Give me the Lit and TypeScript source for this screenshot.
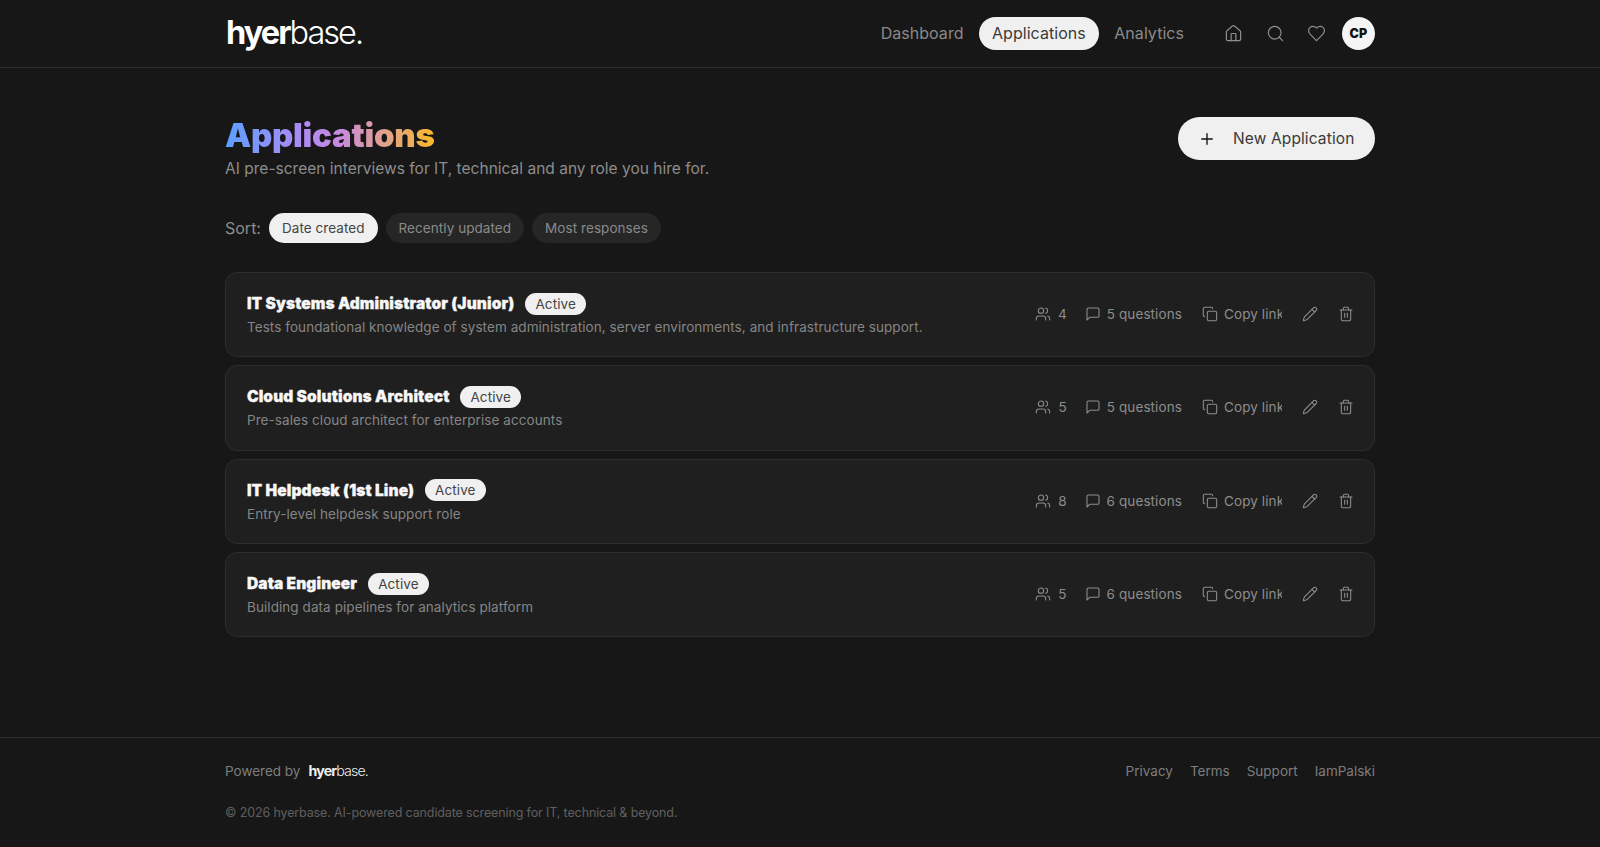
import { LitElement, html, css, svg } from "lit";
import { customElement } from "lit/decorators.js";

const ic = (body: unknown, size = 16, sw = 1.6) => html`<svg class="ic" width=${size} height=${size} viewBox="0 0 24 24" fill="none" stroke="currentColor" stroke-width=${sw} stroke-linecap="round" stroke-linejoin="round">${body}</svg>`;
const house = svg`<path d="M15 21v-8a1 1 0 0 0-1-1h-4a1 1 0 0 0-1 1v8"/><path d="M3 10a2 2 0 0 1 .709-1.528l7-5.999a2 2 0 0 1 2.582 0l7 5.999A2 2 0 0 1 21 10v9a2 2 0 0 1-2 2H5a2 2 0 0 1-2-2z"/>`;
const search = svg`<circle cx="11" cy="11" r="8"/><path d="m21 21-4.3-4.3"/>`;
const heart = svg`<path d="M19 14c1.49-1.46 3-3.21 3-5.5A5.5 5.5 0 0 0 16.5 3c-1.76 0-3 .5-4.5 2-1.5-1.5-2.74-2-4.5-2A5.5 5.5 0 0 0 2 8.5c0 2.3 1.5 4.05 3 5.5l7 7Z"/>`;
const plus = svg`<path d="M5 12h14"/><path d="M12 5v14"/>`;
const users = svg`<path d="M16 21v-2a4 4 0 0 0-4-4H6a4 4 0 0 0-4 4v2"/><circle cx="9" cy="7" r="4"/><path d="M22 21v-2a4 4 0 0 0-3-3.87"/><path d="M16 3.13a4 4 0 0 1 0 7.75"/>`;
const msg = svg`<path d="M21 15a2 2 0 0 1-2 2H7l-4 4V5a2 2 0 0 1 2-2h14a2 2 0 0 1 2 2z"/>`;
const copy = svg`<rect width="14" height="14" x="8" y="8" rx="2" ry="2"/><path d="M4 16c-1.1 0-2-.9-2-2V4c0-1.1.9-2 2-2h10c1.1 0 2 .9 2 2"/>`;
const pencil = svg`<path d="M21.174 6.812a1 1 0 0 0-3.986-3.987L3.842 16.174a2 2 0 0 0-.5.83l-1.321 4.352a.5.5 0 0 0 .623.622l4.353-1.32a2 2 0 0 0 .83-.497z"/><path d="m15 5 4 4"/>`;
const trash = svg`<path d="M3 6h18"/><path d="M19 6v14c0 1-1 2-2 2H7c-1 0-2-1-2-2V6"/><path d="M8 6V4c0-1 1-2 2-2h4c1 0 2 1 2 2v2"/><line x1="10" x2="10" y1="11" y2="17"/><line x1="14" x2="14" y1="11" y2="17"/>`;

const apps = [
  { t: "IT Systems Administrator (Junior)", d: "Tests foundational knowledge of system administration, server environments, and infrastructure support.", n: 4, q: 5 },
  { t: "Cloud Solutions Architect", d: "Pre-sales cloud architect for enterprise accounts", n: 5, q: 5 },
  { t: "IT Helpdesk (1st Line)", d: "Entry-level helpdesk support role", n: 8, q: 6 },
  { t: "Data Engineer", d: "Building data pipelines for analytics platform", n: 5, q: 6 },
];

@customElement("app-root")
export class AppRoot extends LitElement {
  static styles = css`
    :host { display: block; min-height: 847px; background: #171717; color: #8f8f8f; font-family: Inter, "Liberation Sans", sans-serif; font-size: 14px; }
    * { box-sizing: border-box; }
    .ic { display: block; flex: none; }
    .wrap { width: 1150px; margin: 0 auto; }
    header { height: 68px; border-bottom: 1px solid #2b2b2b; }
    header .wrap { height: 67px; display: flex; align-items: center; justify-content: space-between; }
    .logo { color: #fff; font-size: 32.5px; letter-spacing: -1.95px; line-height: 1; padding-left: 1px; font-weight: 300; }
    .logo b { font-weight: 700; }
    .right { display: flex; align-items: center; }
    nav { display: flex; align-items: center; gap: 3.5px; margin-right: 28px; font-size: 16px; letter-spacing: 0.04px; color: #8a8a8a; }
    nav a { padding: 0 12px; height: 33px; line-height: 33px; border-radius: 17px; }
    nav a.on { background: #f0f0f0; color: #3a3a3a; padding: 0 13px; }
    .icons { display: flex; align-items: center; gap: 22.5px; color: #8f8f8f; }
    .avatar { width: 33px; height: 33px; border-radius: 50%; background: #f5f5f5; color: #111; font-weight: 900; font-size: 12.5px; display: flex; align-items: center; justify-content: center; margin-left: 16px; letter-spacing: .3px; }
    main { padding-top: 49px; height: 669px; }
    .top { display: flex; justify-content: space-between; align-items: flex-start; }
    h1 { margin: 0; font-size: 33px; line-height: 36px; font-weight: 900; letter-spacing: -0.25px; background: linear-gradient(90deg, #5b9fff 0%, #a98bf5 35%, #c98ade 55%, #e0a090 75%, #fbb92a 100%); -webkit-background-clip: text; background-clip: text; color: transparent; width: max-content; }
    .sub { font-size: 15.5px; line-height: 22px; margin-top: 5px; color: #8d8d8d; letter-spacing: .01px; }
    .btn { width: 197px; height: 43px; border-radius: 22px; background: #f0f0f0; color: #3a3a3a; font-size: 15.5px; display: flex; align-items: center; gap: 17px; padding-left: 20px; letter-spacing: .12px; }
    .btn .ic { color: #111; }
    .sort { display: flex; align-items: center; gap: 8px; margin-top: 33px; }
    .sort > span { font-size: 16px; color: #8d8d8d; }
    .pill { height: 30px; line-height: 30px; padding: 0 13px; border-radius: 15px; background: #262626; font-size: 13.5px; color: #8a8a8a; letter-spacing: .06px; }
    .pill.on { background: #f0f0f0; color: #444; }
    .list { display: flex; flex-direction: column; gap: 8px; margin-top: 29px; }
    .card { height: 85.3px; background: #1f1f1f; border: 1px solid #2d2d2d; border-radius: 12px; padding: 0 20px 0 21px; display: flex; align-items: center; justify-content: space-between; }
    .tl { display: flex; align-items: center; gap: 11px; height: 23px; }
    .tl b { color: #f7f7f7; font-size: 15.5px; font-weight: 900; letter-spacing: .1px; -webkit-text-stroke: .3px #f7f7f7; }
    .badge { height: 22px; line-height: 22px; padding: 0 10px; border-radius: 11px; background: #f0f0f0; color: #444; font-size: 13.5px; letter-spacing: .1px; }
    .d { font-size: 13.5px; line-height: 20px; margin-top: 2px; color: #858585; letter-spacing: .07px; }
    .meta { display: flex; align-items: center; gap: 20px; color: #8d8d8d; margin-top: -1px; }
    .m { display: flex; align-items: center; gap: 6px; font-size: 13.5px; letter-spacing: .1px; white-space: nowrap; }
    .m.count { gap: 7px; margin-right: -2px; }
    .clip { width: 58px; overflow: hidden; }
    footer { border-top: 1px solid #2b2b2b; padding-top: 22px; height: 110px; }
    .fr { display: flex; align-items: center; justify-content: space-between; height: 22px; font-size: 13.5px; color: #7e7e7e; }
    .pw { display: flex; align-items: center; gap: 7px; }
    .pw .logo { font-size: 14.2px; letter-spacing: -0.85px; color: #eee; }
    .links { display: flex; gap: 17px; }
    .copy { margin-top: 21px; font-size: 12.5px; line-height: 20px; color: #5f5f5f; letter-spacing: -.13px; }
  `;
  render() {
    return html`
      <header><div class="wrap">
        <div class="logo"><b>hyer</b>base.</div>
        <div class="right">
          <nav><a>Dashboard</a><a class="on">Applications</a><a>Analytics</a></nav>
          <div class="icons">${ic(house, 19, 1.5)}${ic(search, 19, 1.5)}${ic(heart, 19, 1.5)}</div>
          <div class="avatar">CP</div>
        </div>
      </div></header>
      <main><div class="wrap">
        <div class="top">
          <div><h1>Applications</h1><div class="sub">AI pre-screen interviews for IT, technical and any role you hire for.</div></div>
          <div class="btn">${ic(plus, 18, 1.8)}New Application</div>
        </div>
        <div class="sort"><span>Sort:</span><div class="pill on">Date created</div><div class="pill">Recently updated</div><div class="pill">Most responses</div></div>
        <div class="list">
          ${apps.map(a => html`<div class="card">
            <div><div class="tl"><b>${a.t}</b><span class="badge">Active</span></div><div class="d">${a.d}</div></div>
            <div class="meta">
              <div class="m count">${ic(users)}${a.n}</div>
              <div class="m">${ic(msg)}${a.q} questions</div>
              <div class="m">${ic(copy)}<span class="clip">Copy link</span></div>
              ${ic(pencil)}${ic(trash)}
            </div>
          </div>`)}
        </div>
      </div></main>
      <footer><div class="wrap">
        <div class="fr">
          <div class="pw">Powered by <div class="logo"><b>hyer</b>base.</div></div>
          <div class="links"><a>Privacy</a><a>Terms</a><a>Support</a><a>IamPalski</a></div>
        </div>
        <div class="copy">© 2026 hyerbase. AI-powered candidate screening for IT, technical &amp; beyond.</div>
      </div></footer>
    `;
  }
}
